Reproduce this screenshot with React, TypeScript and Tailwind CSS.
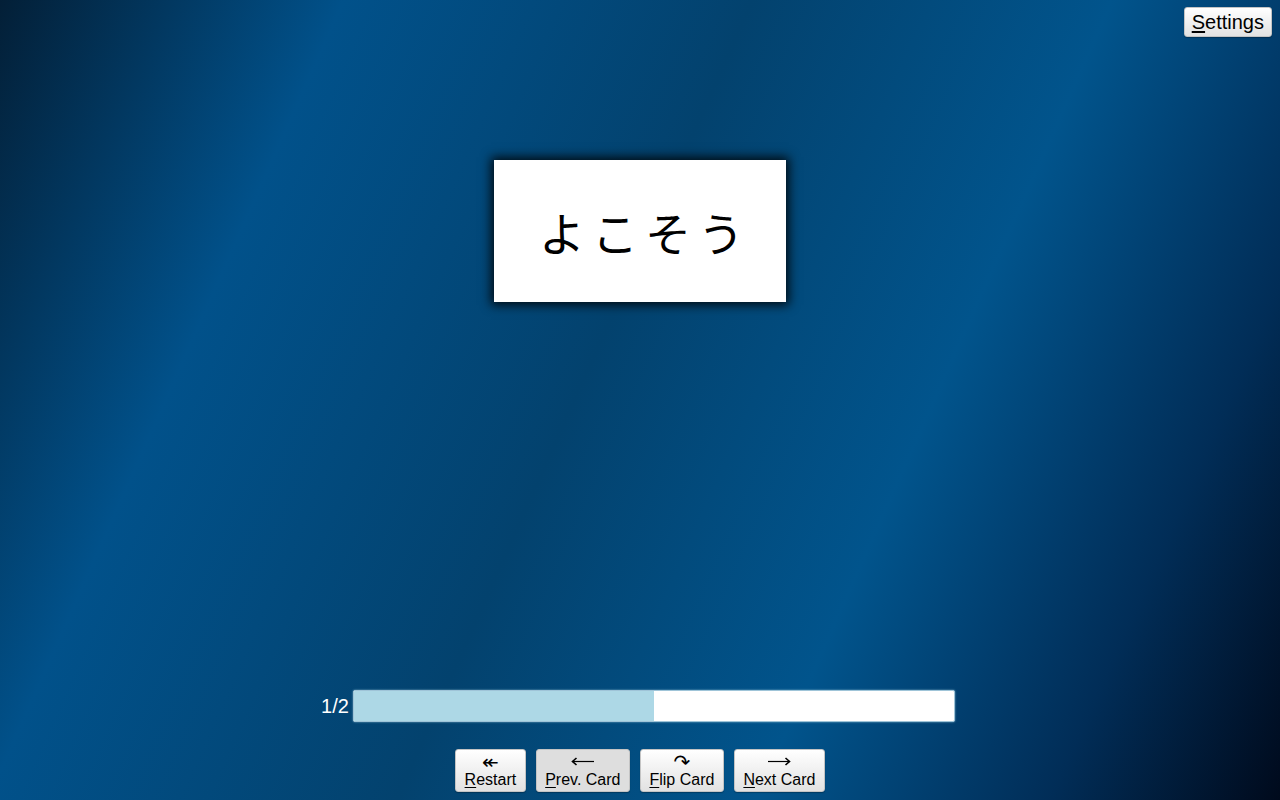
import { ReactNode } from "react";

function AccessLabel({ text }: { text: string }) {
    return (
        <span>
            <span className="underline underline-offset-2">{text[0]}</span>
            {text.slice(1)}
        </span>
    );
}

function LongArrow({ dir }: { dir: "left" | "right" }) {
    return (
        <svg width="23" height="9" viewBox="0 0 23 9" className={dir === "right" ? "-scale-x-100" : ""}>
            <path d="M2 4.5H23" stroke="black" strokeWidth="1.2" />
            <path d="M5.5 1L1.5 4.5L5.5 8" stroke="black" strokeWidth="1.6" fill="none" strokeLinejoin="miter" />
        </svg>
    );
}

function NavButton({ icon, label, pressed }: { icon: ReactNode; label: string; pressed?: boolean }) {
    return (
        <button
            className={`flex h-[43px] flex-col items-center justify-center rounded-[3px] border border-[#c4c4c4] px-[8.5px] text-[16px] leading-[18px] text-black shadow-[0_1px_1px_rgba(0,0,0,0.25)] font-[family-name:'Liberation_Sans','DejaVu_Sans',sans-serif] ${pressed ? "bg-[#dedede]" : "bg-gradient-to-b from-white to-[#e2e2e2]"}`}
        >
            <span className="flex h-[18px] items-center text-[20px] leading-[18px]">{icon}</span>
            <AccessLabel text={label} />
        </button>
    );
}

export default function App() {
    const current = 1;
    const total = 2;

    return (
        <div className="relative flex h-[800px] w-full flex-col items-center overflow-hidden pt-[160px] pb-2 font-[family-name:'Liberation_Sans','DejaVu_Sans',sans-serif] bg-[linear-gradient(114deg,#031f37_0%,#01518a_21%,#03426e_46%,#01548c_68%,#012d57_86%,#000a1c_100%)]">
            {/* Settings */}
            <button className="absolute top-[7px] right-2 h-[30px] rounded-[3px] border border-[#c4c4c4] bg-gradient-to-b from-white to-[#e2e2e2] px-[7px] text-[20px] leading-[23px] text-black shadow-[0_1px_1px_rgba(0,0,0,0.25)] font-[family-name:'Liberation_Sans',sans-serif]">
                <AccessLabel text="Settings" />
            </button>

            {/* Card */}
            <div className="flex h-[142px] w-[292px] items-center justify-center bg-white shadow-[0_0_10px_3px_rgba(0,0,0,0.85)]">
                <span className="pl-[10px] text-[46px] tracking-[7px] text-black font-[family-name:'Noto_Sans_CJK_JP',sans-serif]">
                    よこそう
                </span>
            </div>

            <div className="flex-1" />

            {/* Progress */}
            <div className="flex items-center gap-[4px] pr-1">
                <span className="text-[20px] leading-none text-white">
                    {current}/{total}
                </span>
                <div className="h-[32px] w-[602px] overflow-hidden rounded-[2px] border border-[#9fc4d8] bg-white shadow-[0_0_2px_rgba(173,216,230,0.8)]">
                    <div className="h-full bg-[#add8e6]" style={{ width: `${(current / total) * 100}%` }} />
                </div>
            </div>

            {/* Controls */}
            <div className="mt-[27px] flex gap-[10px]">
                <NavButton icon="↞" label="Restart" />
                <NavButton icon={<LongArrow dir="left" />} label="Prev. Card" pressed />
                <NavButton icon="↷" label="Flip Card" />
                <NavButton icon={<LongArrow dir="right" />} label="Next Card" />
            </div>
        </div>
    );
}
